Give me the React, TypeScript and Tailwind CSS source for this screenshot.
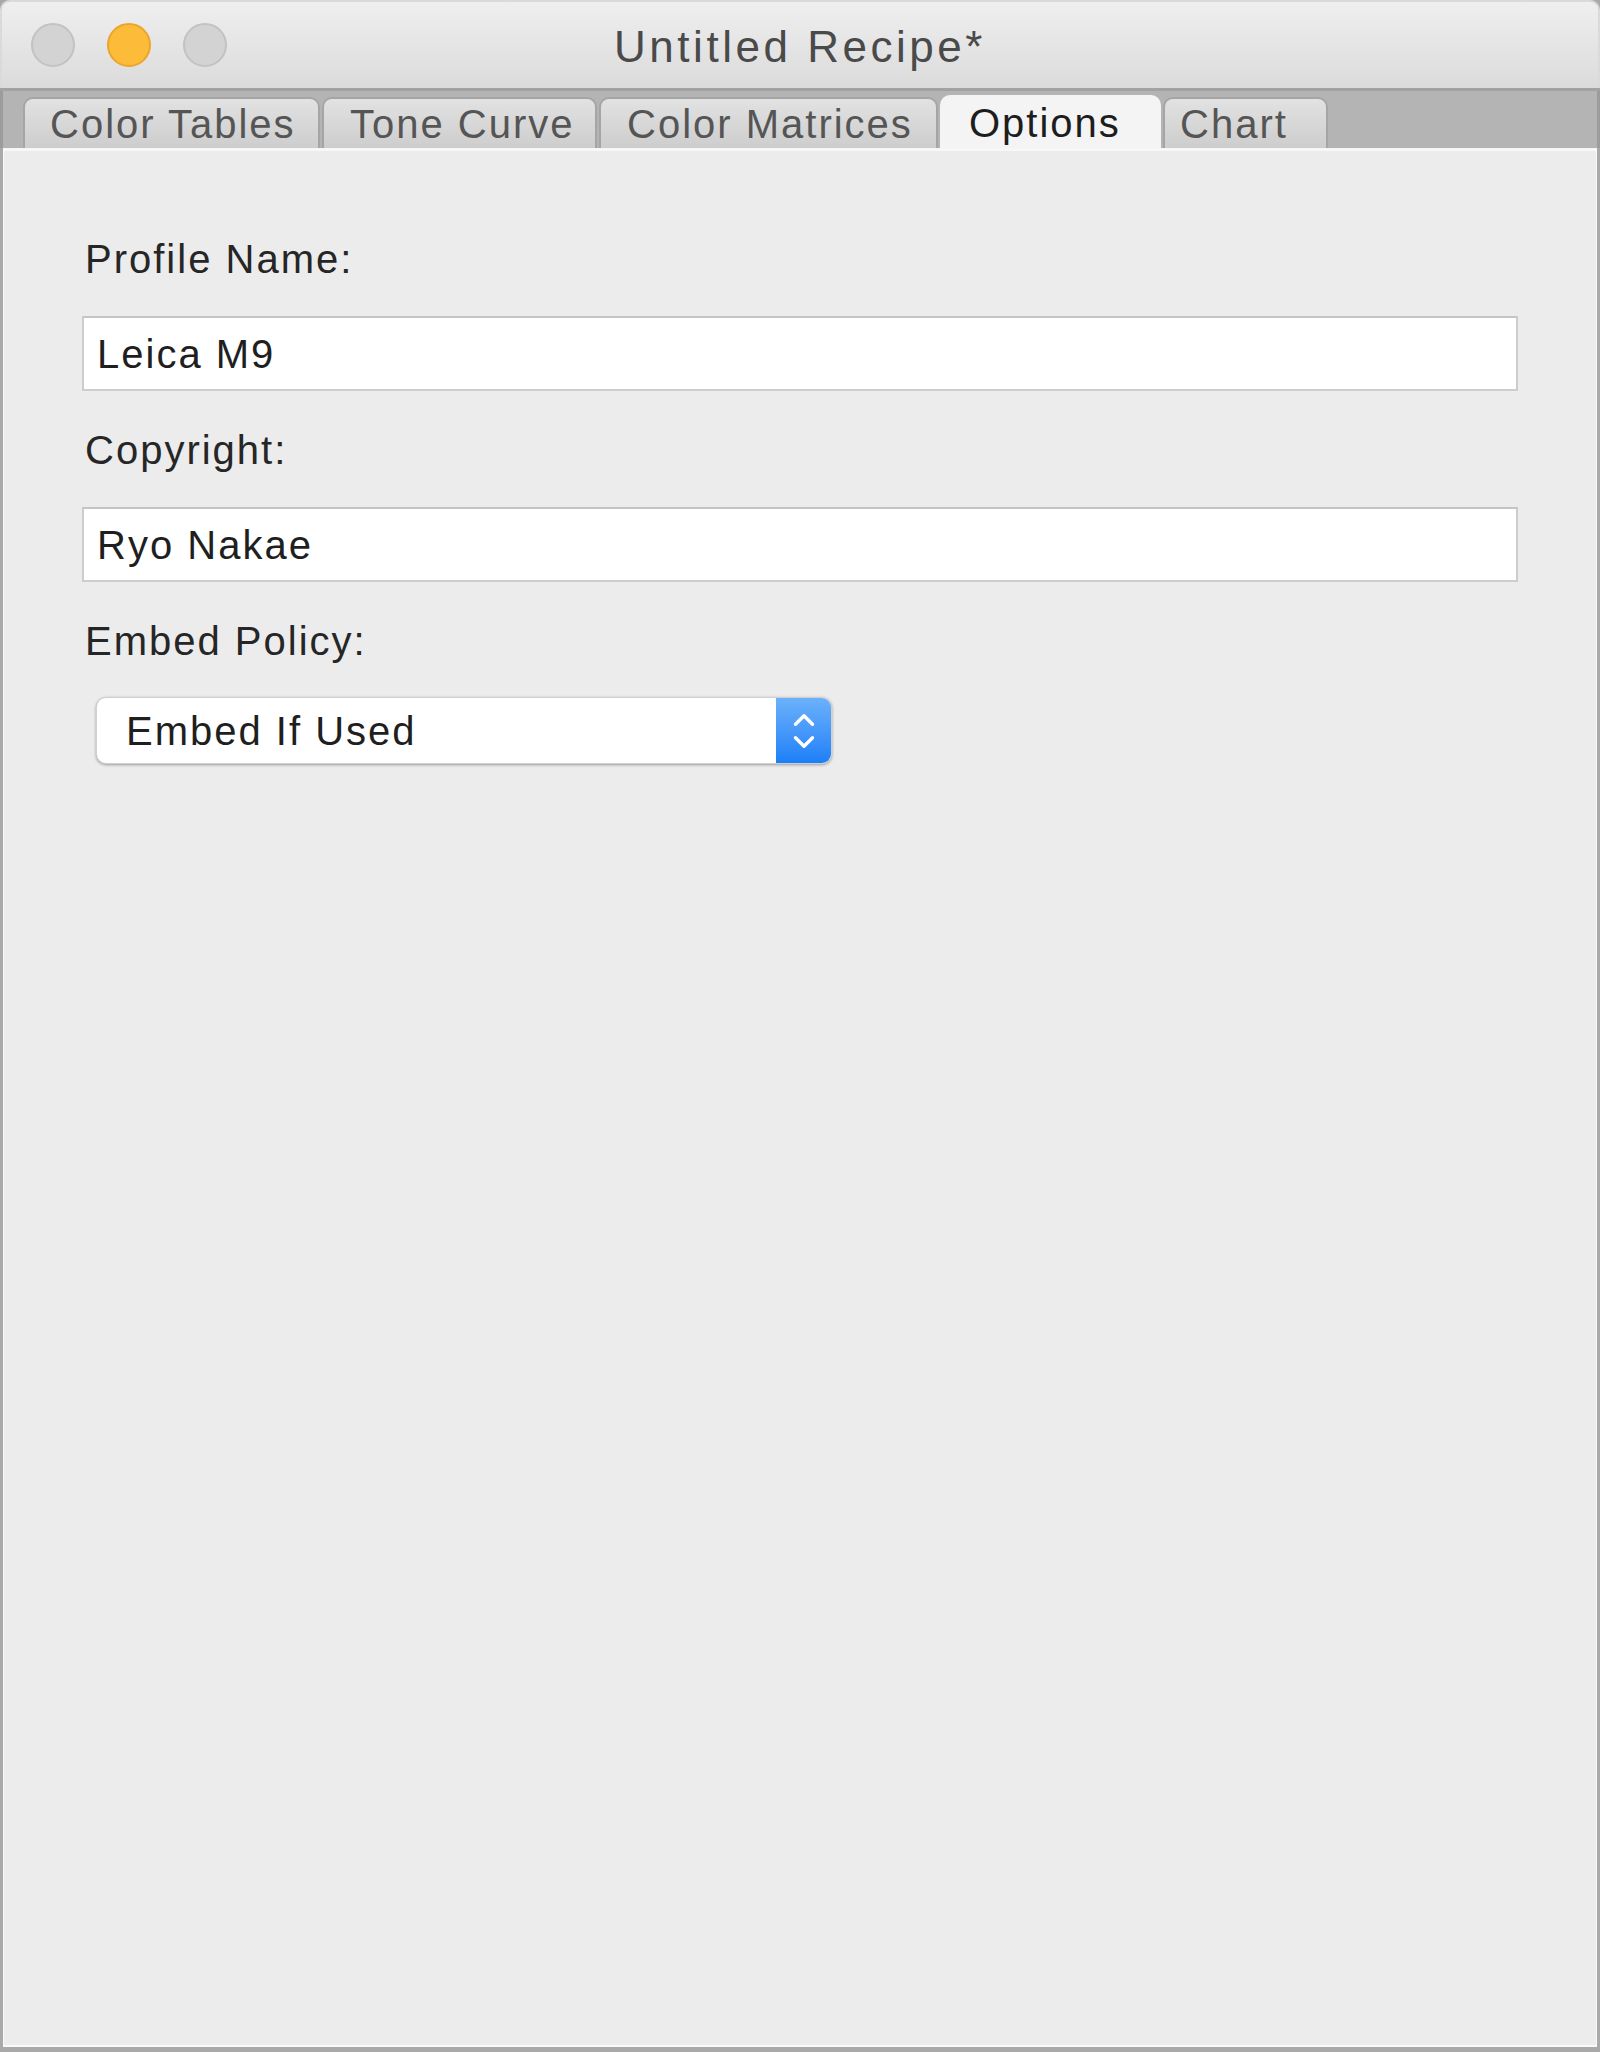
import { ChevronDown, ChevronUp } from "lucide-react"

const tabs = [
  { label: "Color Tables", width: "w-[297px] pl-[25px]" },
  { label: "Tone Curve", width: "w-[275px] pl-[26px]" },
  { label: "Color Matrices", width: "w-[339px] pl-[26px]" },
  { label: "Options", width: "w-[221px] pl-[27px]", active: true },
  { label: "Chart", width: "w-[165px] pl-[15px]" },
]

const TrafficLights = () => {
  return (
    <div className="flex items-center gap-[32px] pl-[29px]">
      <span className="w-[44px] h-[44px] rounded-full bg-[#d3d3d3] border-2 border-[#c2c2c2]" />
      <span className="w-[44px] h-[44px] rounded-full bg-[#fdbb3a] border-2 border-[#e9a52c]" />
      <span className="w-[44px] h-[44px] rounded-full bg-[#d3d3d3] border-2 border-[#c2c2c2]" />
    </div>
  )
}

interface FieldProps {
  label: string
  value: string
}

const TextField = ({ label, value }: FieldProps) => {
  return (
    <div className="flex flex-col">
      <label className="h-[44px] leading-[44px] pl-[3px] text-[40px] tracking-[0.05em] text-[#262626]">{label}</label>
      <div className="mt-[35px] h-[75px] bg-white border-2 border-[#cdcdcd] border-t-[#c4c4c4] flex items-center pl-[13px] text-[40px] tracking-[0.05em] text-[#1f1f1f]">
        {value}
      </div>
    </div>
  )
}

export default function App() {
  return (
    <div className="w-[1600px] h-[2052px] flex flex-col bg-[#a9a9a9] font-['Liberation_Sans',Arial,sans-serif] overflow-hidden">
      {/* title bar */}
      <div className="h-[88px] shrink-0 grid grid-cols-[1fr_auto_1fr] items-center bg-gradient-to-b from-[#efefef] to-[#dbdbdb] border-t-2 border-x-2 border-[#dadada] rounded-t-[10px]">
        <TrafficLights />
        <div className="text-[44px] tracking-[0.08em] text-[#4a4a4a] pt-[4px]">Untitled Recipe*</div>
        <div />
      </div>
      <div className="h-[3px] shrink-0 bg-[#a2a2a2]" />

      {/* tab strip */}
      <div className="h-[57px] shrink-0 flex items-end gap-[2px] pl-[20px] bg-[#b4b4b4] border-x-[3px] border-[#9c9c9c]">
        {tabs.map((t) => (
          <div
            key={t.label}
            className={`${t.width} h-[51px] flex items-center rounded-t-[10px] border-x-2 border-t-2 text-[40px] tracking-[0.05em] ${
              t.active
                ? "bg-[#f4f4f4] border-[#f4f4f4] text-[#1d1d1d] h-[53px]"
                : "bg-gradient-to-b from-[#e2e2e2] to-[#cdcdcd] border-[#a5a5a5] text-[#555555]"
            }`}
          >
            {t.label}
          </div>
        ))}
      </div>

      {/* content */}
      <div className="flex-1 flex flex-col mx-[3px] mb-[5px] bg-[#ececec] border-t-[3px] border-[#f7f7f7] border-x border-x-[#f9f9f9] border-b-2 border-b-[#f9f9f9] px-[78px] pt-[86px]">
        <TextField label="Profile Name:" value="Leica M9" />
        <div className="mt-[37px]">
          <TextField label="Copyright:" value="Ryo Nakae" />
        </div>

        <label className="mt-[37px] h-[44px] leading-[44px] pl-[3px] text-[40px] tracking-[0.05em] text-[#262626]">Embed Policy:</label>

        <div className="mt-[34px] ml-[14px] w-[736px] h-[67px] flex rounded-[10px] bg-white shadow-[0_1px_3px_rgba(0,0,0,0.35)] border border-[#d0d0d0] overflow-hidden">
          <div className="flex-1 flex items-center pl-[29px] text-[40px] tracking-[0.05em] text-[#1f1f1f]">Embed If Used</div>
          <div className="w-[55px] flex flex-col items-center justify-center bg-gradient-to-b from-[#6bb1fb] to-[#1a7ff8] text-white">
            <ChevronUp size={34} strokeWidth={2.4} className="-mb-[12px]" />
            <ChevronDown size={34} strokeWidth={2.4} />
          </div>
        </div>
      </div>
    </div>
  )
}
